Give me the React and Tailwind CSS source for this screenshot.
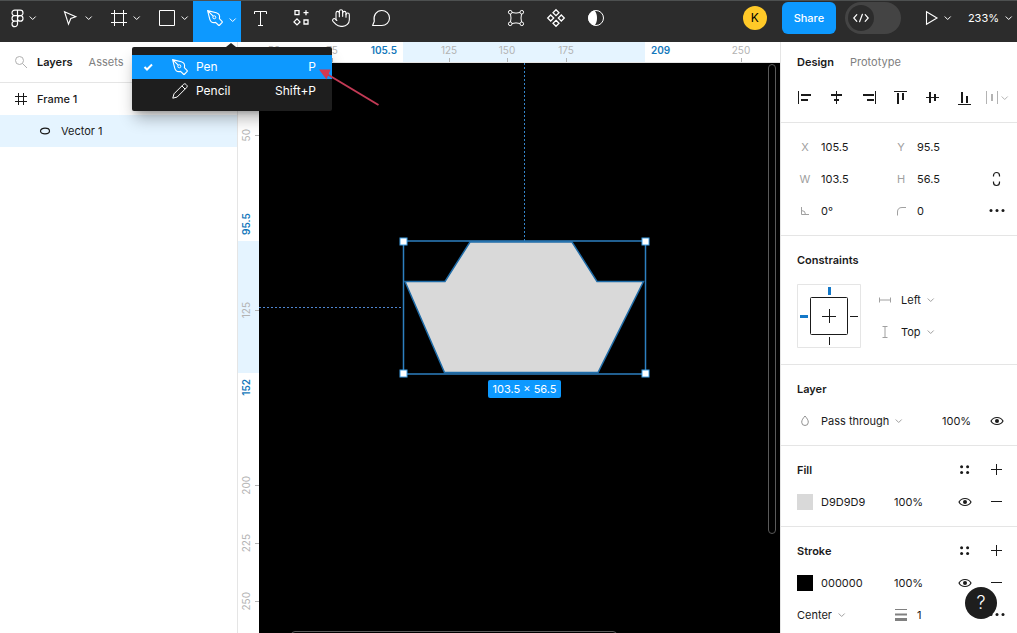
import React, { useState } from "react";
import clsx from "clsx";
import { Hand } from "lucide-react";

// ruler units -> pixels inside the canvas area
const ZOOM = 7 / 3;
const toX = (value) => Math.round(value * ZOOM - 80.8);
const toY = (value) => Math.round(value * ZOOM - 24);

const Icon = ({ children, className = "size-4", viewBox = "0 0 16 16" }) => (
  <svg
    viewBox={viewBox}
    className={clsx("shrink-0 overflow-visible", className)}
    fill="none"
    stroke="currentColor"
    strokeWidth="1"
    aria-hidden="true"
  >
    {children}
  </svg>
);

const Chevron = ({ className }) => (
  <Icon className={clsx("size-2", className)} viewBox="0 0 8 8">
    <path d="M.7 2.5l3 3 3-3" />
  </Icon>
);

const PenIcon = () => (
  <Icon>
    <path
      strokeLinejoin="round"
      strokeWidth="1.1"
      d="M.6.6l8.7 2.2c2.6.8 3.7 3.2 3.1 5.8L15 11.3c.5.5.5.9 0 1.4l-2.3 2.3c-.5.5-.9.5-1.4 0l-2.7-2.6c-2.6.6-5-.5-5.8-3.1L.6.6l5.6 5.6"
    />
    <circle cx="7.3" cy="7.3" r="1.5" />
  </Icon>
);

const PencilIcon = () => (
  <Icon>
    <path
      strokeLinejoin="round"
      d="M.8 15.2l1.2-4.4 9.4-9.4c.8-.8 1.8-.8 2.6 0l.6.6c.8.8.8 1.8 0 2.6L5.2 14 .8 15.2zM9.9 2.9l3.2 3.2"
    />
  </Icon>
);

const FrameIcon = () => (
  <Icon>
    <path d="M3.5 0v16M12.5 0v16M0 3.5h16M0 12.5h16" />
  </Icon>
);

const EyeIcon = () => (
  <Icon>
    <path
      strokeWidth="1.2"
      d="M2 8c1.2-2.2 3.3-3.5 6-3.5S12.8 5.8 14 8c-1.2 2.2-3.3 3.5-6 3.5S3.2 10.2 2 8z"
    />
    <circle cx="8" cy="8" r="2" fill="currentColor" stroke="none" />
  </Icon>
);

const PlusIcon = () => (
  <Icon>
    <path d="M2 7.5h11M7.5 2v11" />
  </Icon>
);

const MinusIcon = () => (
  <Icon>
    <path d="M2 7.5h11" />
  </Icon>
);

const StylesIcon = () => (
  <Icon>
    <g fill="currentColor" stroke="none">
      <circle cx="4.6" cy="4.8" r="1.5" />
      <circle cx="10.6" cy="4.8" r="1.5" />
      <circle cx="4.6" cy="10.4" r="1.5" />
      <circle cx="10.6" cy="10.4" r="1.5" />
    </g>
  </Icon>
);

const DotsIcon = () => (
  <Icon>
    <g fill="currentColor" stroke="none">
      <circle cx="2" cy="7.6" r="1.5" />
      <circle cx="8" cy="7.6" r="1.5" />
      <circle cx="14" cy="7.6" r="1.5" />
    </g>
  </Icon>
);

// rects for each align button: [x, y, width, height]
const alignButtons = [
  { label: "Align left", rects: [[1, 1, 1, 13], [4, 4, 10, 2], [4, 9, 7, 2]] },
  { label: "Align horizontal centers", rects: [[7, 1, 1, 13], [2, 4, 11, 2], [5, 9, 5, 2]] },
  { label: "Align right", rects: [[14, 1, 1, 13], [2, 4, 11, 2], [6, 9, 7, 2]] },
  { label: "Align top", rects: [[1, 1, 13, 1], [4, 3, 2, 11], [9, 3, 2, 7]] },
  { label: "Align vertical centers", rects: [[1, 7, 13, 1], [4, 2, 2, 11], [9, 4, 2, 7]] },
  { label: "Align bottom", rects: [[1, 14, 13, 1], [4, 2, 2, 11], [9, 6, 2, 7]] },
];

const ToolButton = ({ label, wide, active, className, children, ...props }) => (
  <button
    type="button"
    aria-label={label}
    className={clsx(
      "flex h-full items-center pb-[7px] text-white",
      wide ? "justify-end gap-1.5 pr-1" : "w-10 justify-center",
      active && "bg-[#0d99ff]",
      className
    )}
    {...props}
  >
    {children}
  </button>
);

const PenMenu = () => (
  <div
    role="menu"
    className="absolute top-[46px] -left-[61px] z-20 w-[200px] rounded-xs bg-[#1e1e1e] py-2 text-xs text-white shadow-lg shadow-black/30"
  >
    <Icon className="absolute -top-1 left-[94px] h-1 w-[10px]" viewBox="0 0 10 4">
      <path d="M0 4l5-4 5 4z" fill="#1e1e1e" stroke="none" />
    </Icon>
    <button
      type="button"
      role="menuitem"
      className="flex h-6 w-full items-center bg-[#0d99ff] pr-4 pl-2"
    >
      <Icon>
        <path d="M4.5 8l2.5 2.5L12 5.5" strokeWidth="2" />
      </Icon>
      <span className="mr-2 ml-4">
        <PenIcon />
      </span>
      Pen
      <span className="ml-auto">P</span>
    </button>
    <button
      type="button"
      role="menuitem"
      className="flex h-6 w-full items-center pr-4 pl-2"
    >
      <span className="mr-2 ml-8">
        <PencilIcon />
      </span>
      Pencil
      <span className="ml-auto">Shift+P</span>
    </button>
    {/* arrow pointing at the shortcut */}
    <svg
      viewBox="0 0 64 40"
      className="pointer-events-none absolute top-[22px] left-[187px] h-10 w-16"
      fill="none"
      aria-hidden="true"
    >
      <path d="M59.5 36L7 4.5" stroke="#c23a55" strokeWidth="2" />
      <path d="M0 .5h11.5L7.5 10.5z" fill="#d43850" />
    </svg>
  </div>
);

const Toolbar = () => {
  const [menuOpen, setMenuOpen] = useState(true);
  const [devMode, setDevMode] = useState(false);

  return (
    <header className="flex h-[42px] shrink-0 justify-between border-t border-[#4d5050] bg-[#2c2c2c] text-white">
      <div className="flex pl-px">
        <ToolButton label="Main menu" wide className="w-10">
          <Icon className="h-4 w-[11px]" viewBox="5 2 14 20">
            <path
              strokeWidth="1.5"
              d="M5 5.5A3.5 3.5 0 0 1 8.5 2H12v7H8.5A3.5 3.5 0 0 1 5 5.5zM12 2h3.5a3.5 3.5 0 1 1 0 7H12V2zM12 12.5a3.5 3.5 0 1 1 7 0 3.5 3.5 0 1 1-7 0zM5 19.5A3.5 3.5 0 0 1 8.5 16H12v3.5a3.5 3.5 0 1 1-7 0zM5 12.5A3.5 3.5 0 0 1 8.5 9H12v7H8.5A3.5 3.5 0 0 1 5 12.5z"
            />
          </Icon>
          <Chevron />
        </ToolButton>
        <ToolButton label="Move" wide className="w-14">
          <Icon>
            <path d="M1.5 1.7l11.3 5-5 1.8-2.3 5.7z" strokeWidth="1.1" />
          </Icon>
          <Chevron />
        </ToolButton>
        <ToolButton label="Frame" wide className="w-12">
          <FrameIcon />
          <Chevron />
        </ToolButton>
        <ToolButton label="Rectangle" wide className="w-12">
          <Icon>
            <path d="M.5.5h15v15H.5z" />
          </Icon>
          <Chevron />
        </ToolButton>
        <div className="relative">
          <ToolButton
            label="Pen"
            wide
            active
            className="w-12"
            aria-expanded={menuOpen}
            onClick={() => setMenuOpen(!menuOpen)}
          >
            <PenIcon />
            <Chevron className="mt-1" />
          </ToolButton>
          {menuOpen && <PenMenu />}
        </div>
        <ToolButton label="Text">
          <Icon>
            <path d="M1.5 4V1.5h12V4M7.5 1.5v14M5 15.5h5" />
          </Icon>
        </ToolButton>
        <ToolButton label="Resources">
          <Icon>
            <path
              strokeWidth="1.3"
              d="M2 .7h4v4H2zM11 10h4v4h-4zM13 .2v5M10.5 2.7h5M4 8.9l3 3-3 3-3-3z"
            />
          </Icon>
        </ToolButton>
        <ToolButton label="Hand tool">
          <Hand size={20} strokeWidth={1.3} />
        </ToolButton>
        <ToolButton label="Comment">
          <Icon className="h-4 w-[18px]" viewBox="0 0 18 16">
            <path
              strokeWidth="1.1"
              strokeLinejoin="round"
              d="M.6 15.5l1.7-4.2C.9 5.4 4.6.5 9.7.5c4.4 0 7.8 3.3 7.8 7.5s-3.4 7.5-7.8 7.5z"
            />
          </Icon>
        </ToolButton>
      </div>

      <div className="flex">
        <ToolButton label="Edit object">
          <Icon>
            <path d="M4 2.5q4 1.2 8 0M4 13.5q4-1.2 8 0M2.5 4q1 4 0 8M13.5 4q-1 4 0 8" />
            <circle cx="2.2" cy="2.2" r="1.8" />
            <circle cx="13.8" cy="2.2" r="1.8" />
            <circle cx="2.2" cy="13.8" r="1.8" />
            <circle cx="13.8" cy="13.8" r="1.8" />
          </Icon>
        </ToolButton>
        <ToolButton label="Create component">
          <Icon>
            <path
              strokeWidth="1.3"
              d="M8-.3l3 3-3 3-3-3zM8 10.3l3 3-3 3-3-3zM2.7 5l3 3-3 3-3-3zM13.3 5l3 3-3 3-3-3z"
            />
          </Icon>
        </ToolButton>
        <ToolButton label="Use as mask">
          <Icon>
            <circle cx="8" cy="8" r="7.5" />
            <path
              fill="currentColor"
              stroke="none"
              d="M6.5.6a7.5 7.5 0 0 0 0 14.8C8.2 13.6 9 11 9 8S8.2 2.4 6.5.6z"
            />
          </Icon>
        </ToolButton>
      </div>

      <div className="flex items-center pr-1 pb-[7px] pl-8 text-[11px]">
        <div className="flex size-6 items-center justify-center rounded-full bg-[#ffc928] text-xs text-black">
          K
        </div>
        <button
          type="button"
          className="ml-[15px] h-8 w-[54px] rounded-md bg-[#0d99ff] text-[11px] font-medium"
        >
          Share
        </button>
        <button
          type="button"
          role="switch"
          aria-checked={devMode}
          aria-label="Dev Mode"
          onClick={() => setDevMode(!devMode)}
          className={clsx(
            "ml-[9px] flex h-8 w-14 items-center rounded-full bg-[#444] px-[3px]",
            devMode && "justify-end"
          )}
        >
          <span className="flex size-[26px] items-center justify-center rounded-full bg-[#2c2c2c]">
            <Icon>
              <path
                strokeWidth="1.2"
                strokeLinecap="round"
                d="M3.8 4.7L.8 8l3 3.3M12.2 4.7l3 3.3-3 3.3M9.4 4.3L6.6 11.7"
              />
            </Icon>
          </span>
        </button>
        <button
          type="button"
          aria-label="Present"
          className="ml-6 flex items-center gap-[3px]"
        >
          <Icon>
            <path d="M1.5 1.8l10.5 6.2-10.5 6.2z" strokeWidth="1.1" />
          </Icon>
          <Chevron />
        </button>
        <button
          type="button"
          aria-label="Zoom"
          className="ml-4 flex items-center gap-1.5"
        >
          233%
          <Chevron />
        </button>
      </div>
    </header>
  );
};

const LayersPanel = () => (
  <aside className="w-[238px] shrink-0 border-r border-[#e5e5e5] bg-white">
    <div className="flex h-[41px] items-center border-b border-[#e5e5e5] pl-[13px]">
      <button type="button" aria-label="Search" className="text-[#b0b0b0]">
        <Icon>
          <circle cx="6.5" cy="6.5" r="4" />
          <path d="M9.5 9.5l4.5 4.5" />
        </Icon>
      </button>
      <button type="button" className="ml-2 font-semibold">
        Layers
      </button>
      <button type="button" className="ml-4 text-[#808080]">
        Assets
      </button>
    </div>
    <ul>
      <li className="flex h-8 items-center gap-2 pl-[13px] font-medium">
        <Icon>
          <path d="M5.5 2v12M10.5 2v12M2 5.5h12M2 10.5h12" />
        </Icon>
        Frame 1
      </li>
      <li className="flex h-8 items-center gap-2 bg-[#e5f4ff] pl-[37px]">
        <Icon>
          <path d="M3.5 8c0-3.8 9-3.8 9 0s-9 3.8-9 0z" strokeWidth="1.2" />
        </Icon>
        Vector 1
      </li>
    </ul>
  </aside>
);

const TopRuler = () => (
  <div className="relative h-[21px] shrink-0 overflow-hidden border-b border-[#e5e5e5] bg-white">
    <div
      className="absolute inset-y-0 bg-[#e5f4ff]"
      style={{ left: toX(105.5), width: toX(209) - toX(105.5) }}
    />
    {[50, 75, 125, 150, 175, 250].map((value) => (
      <div
        key={value}
        className="absolute inset-y-0 flex w-8 -translate-x-1/2 flex-col items-center justify-between text-[10px] leading-4 text-[#b3b3b3]"
        style={{ left: toX(value) }}
      >
        {value}
        <span className="h-1 w-px bg-[#b3b3b3]" />
      </div>
    ))}
    <span
      className="absolute -translate-x-full pr-1.5 text-[10px] leading-4 font-semibold text-[#1478bb]"
      style={{ left: toX(105.5) }}
    >
      105.5
    </span>
    <span
      className="absolute pl-1.5 text-[10px] leading-4 font-semibold text-[#1478bb]"
      style={{ left: toX(209) }}
    >
      209
    </span>
  </div>
);

const LeftRuler = () => (
  <div className="relative w-[21px] shrink-0 overflow-hidden bg-white">
    <div
      className="absolute inset-x-0 bg-[#e5f4ff]"
      style={{ top: toY(95.5) - 21, height: toY(152) - toY(95.5) }}
    />
    {[50, 125, 200, 225, 250].map((value) => (
      <div
        key={value}
        className="absolute inset-x-0 flex h-8 -translate-y-1/2 items-center justify-between text-[10px] text-[#b3b3b3]"
        style={{ top: toY(value) - 21 }}
      >
        <span className="w-4 rotate-180 text-center leading-4 [writing-mode:vertical-rl]">
          {value}
        </span>
        <span className="h-px w-1 bg-[#b3b3b3]" />
      </div>
    ))}
    <span
      className="absolute w-4 -translate-y-full rotate-180 pt-1.5 text-[10px] leading-4 font-semibold text-[#1478bb] [writing-mode:vertical-rl]"
      style={{ top: toY(95.5) - 21 }}
    >
      95.5
    </span>
    <span
      className="absolute w-4 rotate-180 pb-1.5 text-[10px] leading-4 font-semibold text-[#1478bb] [writing-mode:vertical-rl]"
      style={{ top: toY(152) - 21 }}
    >
      152
    </span>
  </div>
);

const handles = [
  [144, 178],
  [386, 178],
  [144, 310],
  [386, 310],
];

const Canvas = () => (
  <main className="flex min-w-0 flex-1 flex-col">
    <TopRuler />
    <div className="flex min-h-0 flex-1">
      <LeftRuler />
      <div className="relative min-w-0 flex-1 overflow-hidden bg-black">
        <svg className="absolute inset-0 size-full" fill="none" aria-hidden="true">
          <path d="M265.5 0v178" stroke="#3585c9" strokeDasharray="2 2" />
          <path d="M0 244.5h144" stroke="#4f86d0" strokeDasharray="2 2" />
          <path
            d="M211 179h102l25 39.5h46.5L339 309.5H185.5L146 218.5h40z"
            fill="#d9d9d9"
            stroke="#1f6ca8"
            strokeWidth="1.5"
          />
          <path d="M144.5 178h242v133h-242z" stroke="#2d7fc0" strokeWidth="1.5" />
          {handles.map(([x, y]) => (
            <rect
              key={`${x}-${y}`}
              x={x - 3}
              y={y - 3}
              width="7"
              height="7"
              fill="#fff"
              stroke="#3f9fe6"
            />
          ))}
        </svg>
        <span className="absolute top-[317px] left-[229px] flex h-[18px] w-[73px] items-center justify-center rounded-xs bg-[#0d99ff] text-[11px] whitespace-nowrap text-white">
          103.5 × 56.5
        </span>
        <div className="absolute top-px right-1 h-[82.5%] w-2 rounded-full border border-[#5a5a5a]" />
        <div className="absolute -bottom-1.5 left-8 h-2 w-[62.5%] rounded-full border border-[#5a5a5a]" />
      </div>
    </div>
  </main>
);

const Section = ({ children }) => (
  <section className="border-b border-[#e5e5e5] py-2 pr-1 pl-4">{children}</section>
);

const Field = ({ id, label, icon, value, className = "w-24" }) => (
  <div className={clsx("flex shrink-0 items-center gap-2", className)}>
    <label
      htmlFor={id}
      aria-label={label}
      className="flex w-4 shrink-0 justify-center text-[#a0a0a0]"
    >
      {icon || label}
    </label>
    <input id={id} defaultValue={value} className="w-16 min-w-0 outline-none" />
  </div>
);

const Select = ({ label, value, options }) => (
  <span className="flex items-center gap-1.5">
    <select
      aria-label={label}
      defaultValue={value}
      className="field-sizing-content appearance-none bg-transparent outline-none"
    >
      {options.map((option) => (
        <option key={option}>{option}</option>
      ))}
    </select>
    <Chevron className="text-[#a0a0a0]" />
  </span>
);

const IconButton = ({ label, children }) => (
  <button
    type="button"
    aria-label={label}
    className="flex h-8 w-8 shrink-0 items-center justify-center"
  >
    {children}
  </button>
);

const Paint = ({ title, color, swatch }) => (
  <>
    <div className="flex h-8 items-center">
      <h2 className="flex-1 font-semibold">{title}</h2>
      <IconButton label={`${title} styles`}>
        <StylesIcon />
      </IconButton>
      <IconButton label={`Add ${title}`}>
        <PlusIcon />
      </IconButton>
    </div>
    <div className="flex h-8 items-center">
      <button
        type="button"
        aria-label={`${title} color`}
        className={clsx("mr-2 size-4 shrink-0", swatch)}
      />
      <input
        aria-label={`${title} hex`}
        defaultValue={color}
        className="w-[73px] outline-none"
      />
      <input
        aria-label={`${title} opacity`}
        defaultValue="100%"
        className="w-8 outline-none"
      />
      <span className="ml-auto flex">
        <IconButton label="Toggle visibility">
          <EyeIcon />
        </IconButton>
        <IconButton label={`Remove ${title}`}>
          <MinusIcon />
        </IconButton>
      </span>
    </div>
  </>
);

const DesignPanel = () => (
  <aside className="w-[237px] shrink-0 overflow-hidden border-l border-[#e5e5e5] bg-white">
    <div className="flex h-10 items-center gap-4 pl-4">
      <button type="button" className="font-semibold">
        Design
      </button>
      <button type="button" className="text-[#808080]">
        Prototype
      </button>
    </div>

    <div className="flex h-[41px] border-b border-[#e5e5e5] pl-2">
      {alignButtons.map(({ label, rects }) => (
        <IconButton key={label} label={label}>
          <Icon>
            {rects.map(([x, y, width, height]) => (
              <rect
                key={`${x}-${y}`}
                x={x}
                y={y}
                width={width}
                height={height}
                fill="currentColor"
                stroke="none"
              />
            ))}
          </Icon>
        </IconButton>
      ))}
      <button
        type="button"
        aria-label="Distribute"
        className="ml-1 flex h-8 items-center text-[#b3b3b3]"
      >
        <Icon>
          <path d="M1.5 1v13M12.5 1v13" />
          <path d="M7 4v7" strokeWidth="2" />
        </Icon>
        <Chevron />
      </button>
    </div>

    <Section>
      <div className="flex h-8 items-center">
        <Field id="x" label="X" value="105.5" />
        <Field id="y" label="Y" value="95.5" className="w-22" />
      </div>
      <div className="flex h-8 items-center">
        <Field id="w" label="W" value="103.5" />
        <Field id="h" label="H" value="56.5" className="w-22" />
        <IconButton label="Constrain proportions">
          <Icon>
            <path
              strokeWidth="1.2"
              d="M4.5 5.5V4.5a3 3 0 0 1 6 0v1M4.5 10.5v1a3 3 0 0 0 6 0v-1"
            />
          </Icon>
        </IconButton>
      </div>
      <div className="flex h-8 items-center">
        <Field
          id="rotation"
          label="Rotation"
          value="0°"
          icon={
            <Icon>
              <path d="M4.5 4v7.5H12M4.5 7.5a4 4 0 0 1 4 4" />
            </Icon>
          }
        />
        <Field
          id="radius"
          label="Corner radius"
          value="0"
          className="w-22"
          icon={
            <Icon>
              <path d="M4.5 12.5V9c0-3 1.5-4.5 4.5-4.5h4" />
            </Icon>
          }
        />
        <IconButton label="Independent corners">
          <DotsIcon />
        </IconButton>
      </div>
    </Section>

    <Section>
      <h2 className="flex h-8 items-center font-semibold">Constraints</h2>
      <div className="flex py-2">
        <Icon className="size-16" viewBox="0 0 64 64">
          <path d="M.5.5h63v63H.5z" stroke="#e5e5e5" />
          <rect x="13.5" y="13.5" width="37" height="37" rx="1" />
          <path d="M32.5 25v14M25 32.5h14M53 32.5h8M32.5 53v8" />
          <path d="M32.5 3v8M3 32.5h8" stroke="#1478c8" strokeWidth="3" />
        </Icon>
        <div className="ml-4">
          <div className="flex h-8 items-center gap-2">
            <Icon className="size-4 text-[#a0a0a0]">
              <path d="M2.5 5.5v5M13.5 5.5v5M2.5 8h11" />
            </Icon>
            <Select
              label="Horizontal constraint"
              value="Left"
              options={["Left", "Right", "Center", "Scale"]}
            />
          </div>
          <div className="flex h-8 items-center gap-2">
            <Icon className="size-4 text-[#a0a0a0]">
              <path d="M5.5 2.5h5M5.5 13.5h5M8 2.5v11" />
            </Icon>
            <Select
              label="Vertical constraint"
              value="Top"
              options={["Top", "Bottom", "Center", "Scale"]}
            />
          </div>
        </div>
      </div>
    </Section>

    <Section>
      <h2 className="flex h-8 items-center font-semibold">Layer</h2>
      <div className="flex h-8 items-center">
        <Icon className="mr-2 size-4 text-[#909090]">
          <path d="M8 3C6 5.3 4.7 7.2 4.7 9.2a3.3 3.3 0 0 0 6.6 0C11.3 7.2 10 5.3 8 3z" />
        </Icon>
        <Select
          label="Blend mode"
          value="Pass through"
          options={["Pass through", "Normal", "Multiply"]}
        />
        <input
          aria-label="Layer opacity"
          defaultValue="100%"
          className="ml-auto w-[39px] outline-none"
        />
        <IconButton label="Toggle visibility">
          <EyeIcon />
        </IconButton>
      </div>
    </Section>

    <Section>
      <Paint title="Fill" color="D9D9D9" swatch="bg-[#d9d9d9]" />
    </Section>

    <Section>
      <Paint title="Stroke" color="000000" swatch="bg-black" />
      <div className="flex h-8 items-center">
        <span className="w-24 shrink-0">
          <Select
            label="Stroke position"
            value="Center"
            options={["Center", "Inside", "Outside"]}
          />
        </span>
        <Field
          id="stroke-width"
          label="Stroke width"
          value="1"
          className="w-22"
          icon={
            <Icon className="size-4 text-[#808080]">
              <path d="M2 2.5h12" />
              <path d="M2 7.5h12" strokeWidth="2" />
              <path d="M2 12.5h12" strokeWidth="3" />
            </Icon>
          }
        />
        <IconButton label="Advanced stroke">
          <DotsIcon />
        </IconButton>
      </div>
    </Section>
  </aside>
);

const App = () => (
  <div className="flex h-screen flex-col overflow-hidden bg-white font-['Inter',sans-serif] text-[11px] leading-4 text-[#1a1a1a]">
    <Toolbar />
    <div className="flex min-h-0 flex-1">
      <LayersPanel />
      <Canvas />
      <DesignPanel />
    </div>
    <button
      type="button"
      aria-label="Help"
      className="fixed right-5 bottom-3.5 flex size-8 items-center justify-center rounded-full bg-[#1e1e1e] text-lg font-light text-white"
    >
      ?
    </button>
  </div>
);

export default App;
